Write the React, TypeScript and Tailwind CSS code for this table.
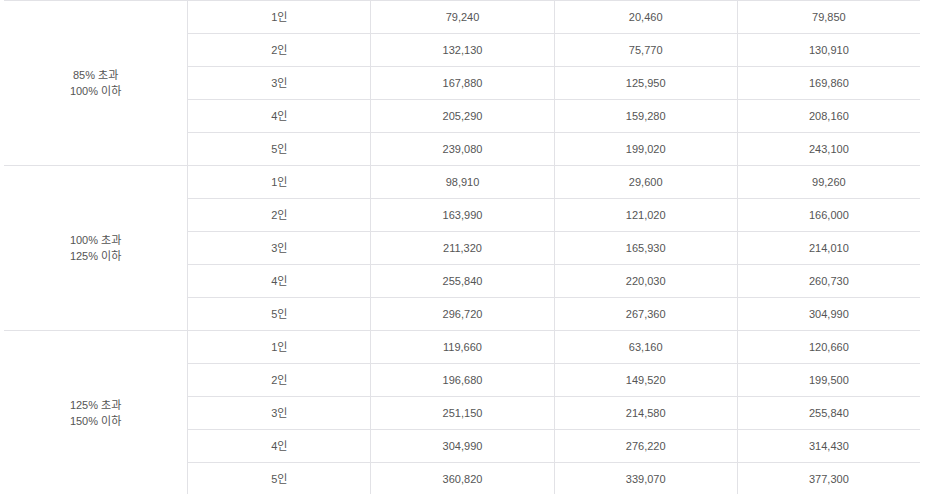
import React from "react";

const groups = [
  {
    label: ["85% 초과", "100% 이하"],
    rows: [
      ["79,240", "20,460", "79,850"],
      ["132,130", "75,770", "130,910"],
      ["167,880", "125,950", "169,860"],
      ["205,290", "159,280", "208,160"],
      ["239,080", "199,020", "243,100"],
    ],
  },
  {
    label: ["100% 초과", "125% 이하"],
    rows: [
      ["98,910", "29,600", "99,260"],
      ["163,990", "121,020", "166,000"],
      ["211,320", "165,930", "214,010"],
      ["255,840", "220,030", "260,730"],
      ["296,720", "267,360", "304,990"],
    ],
  },
  {
    label: ["125% 초과", "150% 이하"],
    rows: [
      ["119,660", "63,160", "120,660"],
      ["196,680", "149,520", "199,500"],
      ["251,150", "214,580", "255,840"],
      ["304,990", "276,220", "314,430"],
      ["360,820", "339,070", "377,300"],
    ],
  },
];

export default function App() {
  return (
    <div className="bg-white w-[927px] h-[494px] overflow-hidden">
      <div
        className="ml-[4px] w-[916px] grid grid-cols-5 border-t border-[#e2e2e6] text-[11px] text-[#555555]"
        style={{ fontFamily: '"Liberation Sans", "Noto Sans CJK KR", sans-serif' }}
      >
        {groups.map((g, gi) => (
          <React.Fragment key={gi}>
            <div className="row-span-5 border-b border-[#e2e2e6] flex flex-col items-center justify-center leading-[16px]">
              <span>{g.label[0]}</span>
              <span>{g.label[1]}</span>
            </div>
            {g.rows.map((r, ri) => (
              <React.Fragment key={ri}>
                <div className="h-[33px] border-b border-l border-[#e2e2e6] flex items-center justify-center">
                  {ri + 1}인
                </div>
                {r.map((v, vi) => (
                  <div
                    key={vi}
                    className="h-[33px] border-b border-l border-[#e2e2e6] flex items-center justify-center"
                  >
                    {v}
                  </div>
                ))}
              </React.Fragment>
            ))}
          </React.Fragment>
        ))}
      </div>
    </div>
  );
}
